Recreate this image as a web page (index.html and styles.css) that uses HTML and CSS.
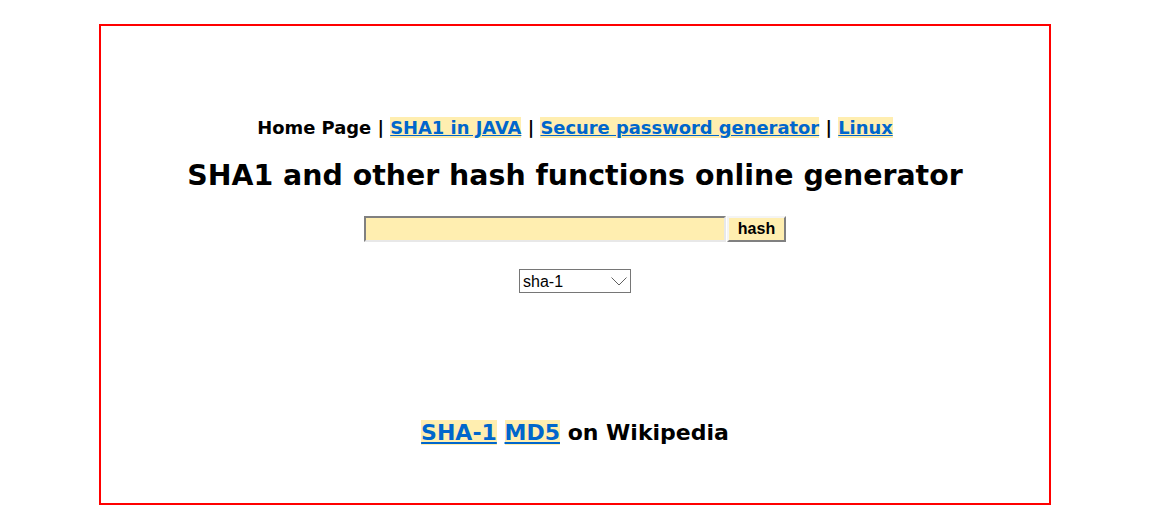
FILE: index.html
```html
<!DOCTYPE html>
<html>
<head>
<meta charset="utf-8">
<link rel="stylesheet" href="styles.css">
</head>
<body>
<div class="page">
  <div class="nav">Home Page | <a href="#">SHA1 in JAVA</a> | <a href="#">Secure password generator</a> | <a href="#">Linux</a></div>
  <h1 class="title">SHA1 and other hash functions online generator</h1>
  <form class="form">
    <div class="row">
      <input class="field" type="text"><button class="btn" type="button">hash</button>
    </div>
    <div class="row2">
      <div class="selwrap">
        <select class="algo"><option>sha-1</option></select>
        <svg class="chev" width="16" height="9" viewBox="0 0 16 9"><path d="M0.5 0.5 L8 8 L15.5 0.5" fill="none" stroke="#606060" stroke-width="1"/></svg>
      </div>
    </div>
  </form>
  <div class="wiki"><a href="#">SHA-1</a> <a href="#">MD5</a> on Wikipedia</div>
</div>
</body>
</html>
```

FILE: styles.css
```css
html, body { margin: 0; padding: 0; background: #fff; }
body { padding-top: 24px; font-family: "DejaVu Sans", Verdana, sans-serif; }
.page {
  width: 948px;
  height: 477px;
  margin: 0 auto;
  border: 2px solid #ff0000;
  text-align: center;
  display: flex;
  flex-direction: column;
  align-items: center;
}
.nav {
  margin-top: 90px;
  font-size: 17.9px;
  font-weight: bold;
  line-height: 24px;
}
a { color: #0066cc; background: #ffeeb0; text-decoration: underline; }
.title {
  margin: 16px 0 0 0;
  font-size: 28.4px;
  line-height: 40px;
}
.form { margin-top: 20px; }
.row { display: flex; justify-content: center; }
.field {
  width: 358px;
  height: 22px;
  box-sizing: content-box;
  padding: 0;
  margin: 0 1px 0 0;
  border: 2px solid;
  border-color: #808080 #e8e8e8 #e8e8e8 #808080;
  background: #ffeeb0;
  outline: none;
}
.btn {
  width: 59px;
  height: 26px;
  padding: 0;
  margin: 0;
  font-family: "Liberation Sans", Arial, sans-serif;
  font-weight: bold;
  font-size: 16px;
  color: #000;
  background: #ffeeb0;
  border: 2px solid;
  border-color: #f4f4f4 #808080 #808080 #f4f4f4;
}
.row2 { margin-top: 27px; display: flex; justify-content: center; }
.selwrap { position: relative; width: 112px; height: 24px; }
.algo {
  -webkit-appearance: none;
  appearance: none;
  width: 112px;
  height: 24px;
  box-sizing: border-box;
  font-family: "Liberation Sans", Arial, sans-serif;
  font-size: 16px;
  color: #000;
  border: 1px solid #767676;
  border-radius: 0;
  background: #fff;
  padding: 0 0 0 3px;
  margin: 0;
  display: block;
}
.chev { position: absolute; right: 4px; top: 8px; pointer-events: none; }
.wiki {
  margin-top: auto;
  margin-bottom: 55px;
  font-size: 22px;
  font-weight: bold;
  line-height: 30px;
}
```
